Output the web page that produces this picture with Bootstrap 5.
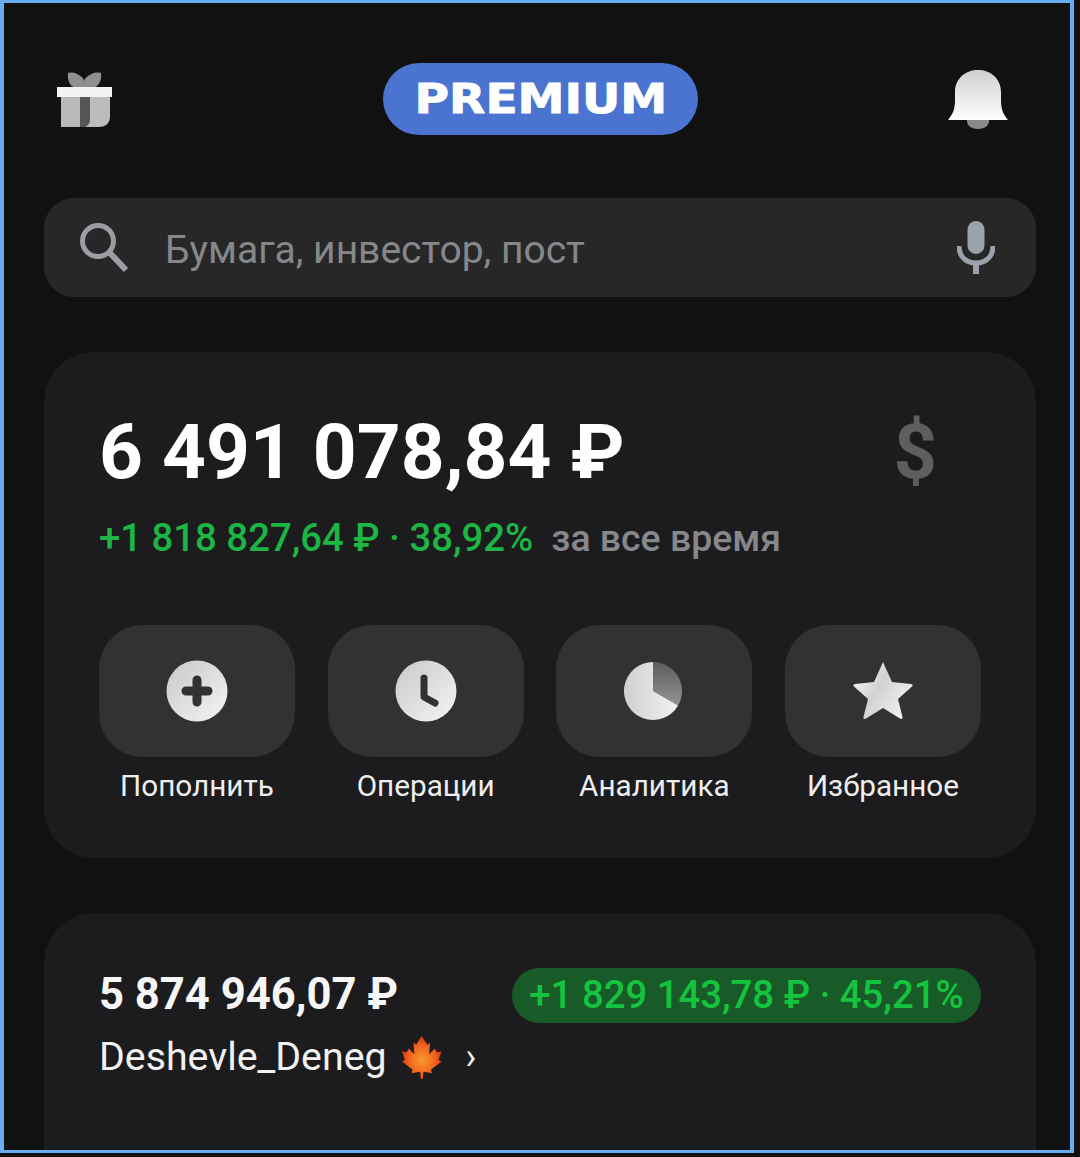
<!DOCTYPE html>
<html lang="ru">
<head>
<meta charset="utf-8">
<title>Пульс</title>
<link href="https://cdn.jsdelivr.net/npm/bootstrap@5.3.0/dist/css/bootstrap.min.css" rel="stylesheet">
<style>
html,body{height:100%;overflow:hidden;background:#111112;font-family:Roboto,"Liberation Sans",sans-serif}
.screen{width:1074px;height:1153px;border:solid #68aef0;border-width:3px 4px;padding:0 34px 0 40px;overflow:hidden;background:#111112}
.top-bar{height:72px;margin-top:60px;padding-left:13px;padding-right:28px}
.gift-ico{margin-top:1px}
.bell-ico{margin-top:1px}
.prem-pill{margin-left:270px;width:315px;height:72px;background:#4a74cf;border-radius:36px;color:#fff;font-family:"DejaVu Sans",sans-serif;font-weight:700;font-size:41px;line-height:1}
.prem-pill span{display:block;transform:scaleX(1.15);-webkit-text-stroke:.8px #fff}
.search-box{height:99px;margin-top:63px;background:#272728;border-radius:30px;padding:0 41px 0 36px;color:#85878b;font-size:39px}
.search-text{margin-left:35px;position:relative;top:3px}
.panel{background:#1c1c1e;border:0;border-radius:50px;margin-top:55px;padding:0 55px;color:#fff}
.panel-main{height:506px}
.panel-next{height:300px;padding-top:55px}
.total-line{height:72px;margin-top:64px;padding-right:44px}
.total-sum{font-size:76.600px;font-weight:700;line-height:72px;color:#fff}
.dollar{font-size:76px;font-weight:700;line-height:72px;color:#5e5e60}
.gain-line{margin-top:29px;font-size:38.300px;line-height:42px;white-space:nowrap}
.gain-val{color:#1db544;font-weight:500}
.gain-note{color:#87888c;margin-left:18px;font-size:37.400px;font-weight:500}
.tiles{margin-top:66px;gap:32.670px}
.tile-col{width:196px;text-align:center}
.tile-box{height:132px;background:#323234;border-radius:44px}
.tile-name{margin-top:12px;font-size:29.700px;line-height:34px;color:#eeeeef;white-space:nowrap}
.sum-small{font-size:43.600px;font-weight:700;line-height:50px;color:#f6f6f6;position:relative;top:-1px}
.gain-pill{height:55px;width:469px;background:#185a28;border-radius:28px;color:#14c43f;font-size:38.300px;font-weight:500;line-height:1;white-space:nowrap}
.owner{font-size:39.300px;line-height:44px;color:#f2f2f2;margin-top:12px}
.chev{margin-left:24px;font-size:36px;line-height:1}
.leaf{margin-left:15px}
.star-ico{margin-top:-3px}
</style>
</head>
<body class="m-0">
<div class="screen">
  <div class="top-bar d-flex align-items-center">
    <svg class="gift-ico" width="56" height="56" viewBox="0 0 56 56">
      <path d="M11 1c3-.6 6-.6 8 .5 4 2 7.500 4 8.200 7.500.7-3.500 4.300-5.500 8.300-7.500 2-1.100 5.500-1.100 8.500-.5.800 5-.5 9.500-4 13l-3 1.500H18L14.500 14C11.500 10.500 10.200 6 11 1z" fill="#909090"/>
      <path d="M4 25h19v30H4z" fill="#b9b9b9"/>
      <path d="M23 25h10v22c0 4-2 7-5 8h-5z" fill="#565656"/>
      <path d="M33 25h20v19c0 7-4 11-11 11H28c3-1 5-4 5-8z" fill="#bcbcbc"/>
      <rect x="0" y="15" width="55" height="10" fill="#f4f4f4"/>
    </svg>
    <div class="prem-pill d-flex align-items-center justify-content-center"><span>PREMIUM</span></div>
    <svg class="ms-auto bell-ico" width="60" height="60" viewBox="0 0 60 60">
      <defs><linearGradient id="bg1" x1="0" y1="0" x2="0" y2="1"><stop offset="0" stop-color="#cfcfcf"/><stop offset="1" stop-color="#ffffff"/></linearGradient></defs>
      <path d="M19 50h22v1c0 5-5 8-11 8s-11-3-11-8z" fill="#8a8a8a"/>
      <path d="M0 50c5-6 7-11 7-20v-8C7 8 18 0 30 0s23 8 23 22v8c0 9 2 14 7 20z" fill="url(#bg1)"/>
    </svg>
  </div>

  <div class="search-box d-flex align-items-center">
    <svg width="50" height="50" viewBox="0 0 50 50">
      <circle cx="18" cy="18" r="15.500" fill="none" stroke="#9a9da3" stroke-width="5"/>
      <path d="M29 29l17 18" stroke="#9a9da3" stroke-width="6" fill="none"/>
    </svg>
    <span class="search-text flex-grow-1">Бумага, инвестор, пост</span>
    <svg width="38" height="54" viewBox="0 0 38 54">
      <rect x="10.500" y="0" width="17" height="33" rx="8.500" fill="#9ca2ab"/>
      <path d="M2 25c0 11 7.500 17 17 17s17-6 17-17" fill="none" stroke="#9ca2ab" stroke-width="5"/>
      <path d="M19 41v12" stroke="#9ca2ab" stroke-width="6"/>
    </svg>
  </div>

  <div class="card panel panel-main">
    <div class="total-line d-flex justify-content-between align-items-center">
      <span class="total-sum">6 491 078,84 ₽</span>
      <span class="dollar">$</span>
    </div>
    <div class="gain-line"><span class="gain-val">+1 818 827,64 ₽ · 38,92%</span><span class="gain-note">за все время</span></div>
    <div class="tiles d-flex">
      <div class="tile-col">
        <div class="tile-box d-flex align-items-center justify-content-center">
          <svg width="62" height="62" viewBox="0 0 62 62">
            <defs><linearGradient id="ig1" x1="0" y1="0" x2="1" y2="1"><stop offset="0" stop-color="#c6c8ca"/><stop offset="1" stop-color="#f5f5f5"/></linearGradient></defs>
            <circle cx="31" cy="31" r="30.500" fill="url(#ig1)"/>
            <path d="M31 20v22M20 31h22" stroke="#323234" stroke-width="9" stroke-linecap="round"/>
          </svg>
        </div>
        <div class="tile-name">Пополнить</div>
      </div>
      <div class="tile-col">
        <div class="tile-box d-flex align-items-center justify-content-center">
          <svg width="62" height="62" viewBox="0 0 62 62">
            <circle cx="31" cy="31" r="30.500" fill="url(#ig1)"/>
            <path d="M29 18v19l11 6" fill="none" stroke="#323234" stroke-width="7" stroke-linecap="round" stroke-linejoin="round"/>
          </svg>
        </div>
        <div class="tile-name">Операции</div>
      </div>
      <div class="tile-col">
        <div class="tile-box d-flex align-items-center justify-content-center">
          <svg width="60" height="60" viewBox="0 0 60 60">
            <defs>
              <linearGradient id="ig2" x1="0" y1="0" x2="1" y2="0"><stop offset="0" stop-color="#cdcfd0"/><stop offset="1" stop-color="#f2f2f2"/></linearGradient>
              <linearGradient id="ig3" x1="0" y1="0" x2="0" y2="1"><stop offset="0" stop-color="#5d5d5f"/><stop offset="1" stop-color="#939395"/></linearGradient>
            </defs>
            <path d="M29 1A29 29 0 0 1 54.100 44.500L29 30z" fill="url(#ig3)"/>
            <path d="M29 1V30L54.100 44.500A29 29 0 1 1 29 1z" fill="url(#ig2)"/>
          </svg>
        </div>
        <div class="tile-name">Аналитика</div>
      </div>
      <div class="tile-col">
        <div class="tile-box d-flex align-items-center justify-content-center">
          <svg class="star-ico" width="62" height="60" viewBox="0 0 62 60">
            <defs><linearGradient id="ig4" x1="0" y1="0" x2="1" y2="0.600"><stop offset="0" stop-color="#ffffff"/><stop offset="0.500" stop-color="#d2d2d3"/><stop offset="1" stop-color="#efefef"/></linearGradient></defs>
            <path d="M31 2l9 20 19 2c2 .3 2 1.500 1 2.500L46 39l4.500 18c.4 2-1 2.500-2.500 1.500L31 48 14 58.500c-1.500 1-3 .5-2.500-1.500L16 39 2 26.500c-1-1-1-2.200 1-2.500l19-2z" fill="url(#ig4)"/>
          </svg>
        </div>
        <div class="tile-name">Избранное</div>
      </div>
    </div>
  </div>

  <div class="card panel panel-next">
    <div class="d-flex justify-content-between align-items-center">
      <span class="sum-small">5 874 946,07 ₽</span>
      <span class="gain-pill d-flex align-items-center justify-content-center">+1 829 143,78 ₽ · 45,21%</span>
    </div>
    <div class="owner d-flex align-items-center">
      <span>Deshevle_Deneg</span>
      <svg class="leaf" width="40" height="44" viewBox="0 0 42 44">
        <defs><radialGradient id="lf" cx="0.500" cy="0.550" r="0.550"><stop offset="0" stop-color="#fb9a2c"/><stop offset="0.600" stop-color="#f0641e"/><stop offset="1" stop-color="#d5300f"/></radialGradient></defs>
        <path d="M20.500 0l6 9 3-2-1 12 6-6 2 4 5-1-3 9 3 2-11 8 1 4-9-1.500-.7 8h-2l-.7-8L10 39l1-4-11-8 3-2-3-9 5 1 2-4 6 6-1-12 3 2z" fill="url(#lf)"/>
      </svg>
      <span class="chev">›</span>
    </div>
  </div>
</div>
<script src="https://cdn.jsdelivr.net/npm/bootstrap@5.3.0/dist/js/bootstrap.bundle.min.js"></script>
</body>
</html>
